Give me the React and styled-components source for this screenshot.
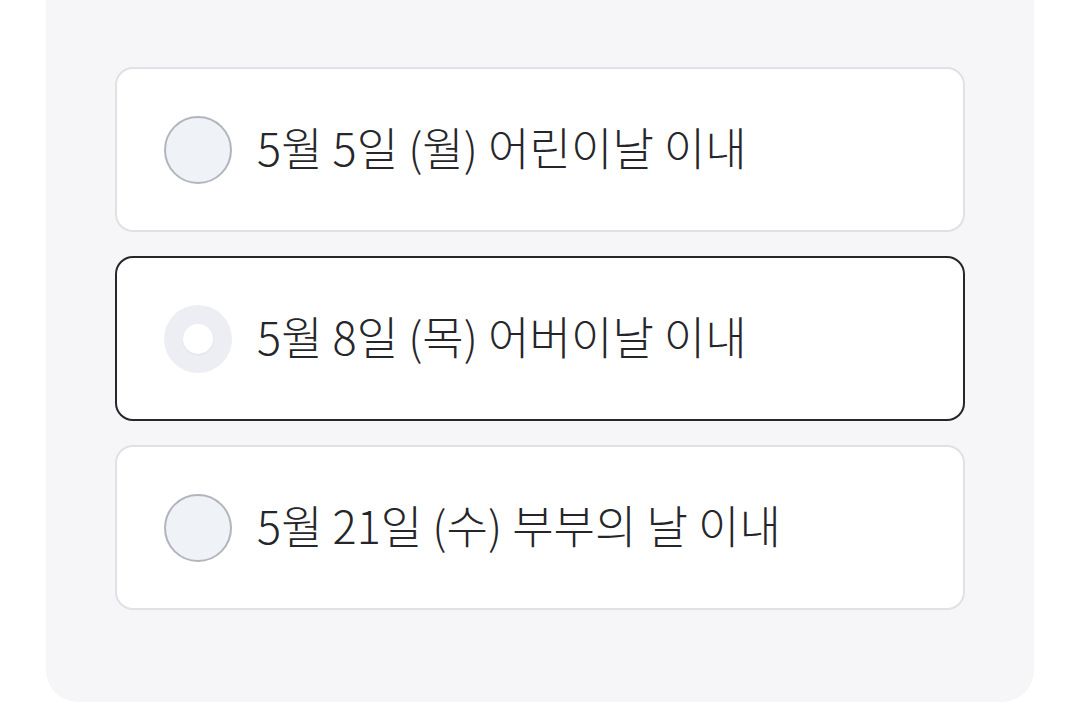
import React from 'react'
import styled, { createGlobalStyle } from 'styled-components'

const GlobalStyle = createGlobalStyle`
    html, body {
        margin:0;
        padding:0;
        background:#ffffff;
        overflow:hidden;
    }
    body {
        font-family:"Noto Sans CJK KR", "Noto Sans", sans-serif;
    }
`

const Page = styled.div`
    width:1080px;
    padding:0 46px 9px;
    box-sizing:border-box;
`

const Panel = styled.div`
    padding:67px 69px 92px;
    background-color:#f6f6f8;
    border-radius:0 0 32px 32px;
    display:flex;
    flex-direction:column;
    gap:24px;
`

const Option = styled.label`
    height:165px;
    box-sizing:border-box;
    display:flex;
    align-items:center;
    gap:25px;
    padding:0 0 0 47px;
    background-color:#ffffff;
    border:2px solid ${props => props.$active ? '#27272b' : '#e0e1e4'};
    border-radius:18px;
    cursor:pointer;
`

const Radio = styled.span`
    width:68px;
    height:68px;
    flex-shrink:0;
    box-sizing:border-box;
    border-radius:50%;
    display:flex;
    align-items:center;
    justify-content:center;
    background-color:${props => props.$active ? '#eceef3' : '#eff2f7'};
    border:${props => props.$active ? 'none' : '2px solid #b2b6bc'};
`

const Dot = styled.span`
    width:30px;
    height:30px;
    border-radius:50%;
    background-color:#ffffff;
    box-shadow:0 1px 2px rgba(0,0,0,0.06);
`

const Label = styled.span`
    font-size:45px;
    font-weight:300;
    letter-spacing:0.05px;
    color:#26262a;
    line-height:1;
    padding-bottom:6px;
`

const options = [
    { id: 1, text: '5월 5일 (월) 어린이날 이내' },
    { id: 2, text: '5월 8일 (목) 어버이날 이내' },
    { id: 3, text: '5월 21일 (수) 부부의 날 이내' },
]

const App = () => {
    const selected = 2
    return (
        <Page>
            <GlobalStyle />
            <Panel>
                {options.map(o => (
                    <Option key={o.id} $active={o.id === selected}>
                        <Radio $active={o.id === selected}>
                            {o.id === selected && <Dot />}
                        </Radio>
                        <Label>{o.text}</Label>
                    </Option>
                ))}
            </Panel>
        </Page>
    )
}

export default App
